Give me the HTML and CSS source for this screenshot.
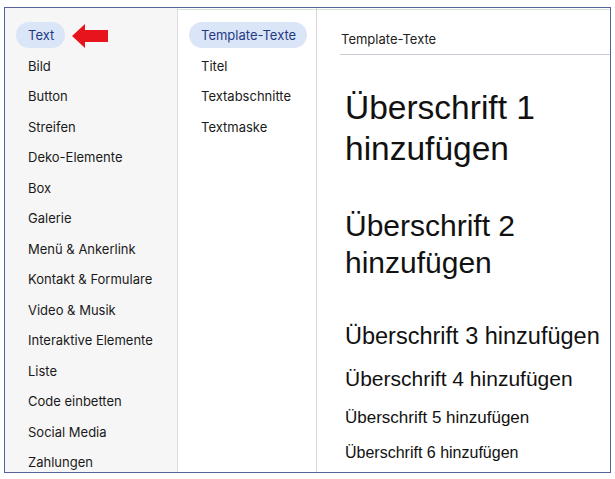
FILE: index.html
```html
<!DOCTYPE html>
<html lang="de">
<head>
<meta charset="utf-8">
<link rel="stylesheet" href="styles.css">
</head>
<body>
<div class="frame">
  <nav class="col col-left">
    <ul class="nav">
      <li class="item"><span class="label active">Text</span></li>
      <li class="item"><span class="label">Bild</span></li>
      <li class="item"><span class="label">Button</span></li>
      <li class="item"><span class="label">Streifen</span></li>
      <li class="item"><span class="label">Deko-Elemente</span></li>
      <li class="item"><span class="label">Box</span></li>
      <li class="item"><span class="label">Galerie</span></li>
      <li class="item"><span class="label">Menü &amp; Ankerlink</span></li>
      <li class="item"><span class="label">Kontakt &amp; Formulare</span></li>
      <li class="item"><span class="label">Video &amp; Musik</span></li>
      <li class="item"><span class="label">Interaktive Elemente</span></li>
      <li class="item"><span class="label">Liste</span></li>
      <li class="item"><span class="label">Code einbetten</span></li>
      <li class="item"><span class="label">Social Media</span></li>
      <li class="item"><span class="label">Zahlungen</span></li>
    </ul>
    <svg class="arrow" width="38" height="26" viewBox="0 0 38 26">
      <polygon points="0,12 13,0 13,6 36,6 36,18 13,18 13,24" fill="#e8141b"/>
    </svg>
  </nav>
  <nav class="col col-mid">
    <ul class="nav">
      <li class="item"><span class="label active">Template-Texte</span></li>
      <li class="item"><span class="label">Titel</span></li>
      <li class="item"><span class="label">Textabschnitte</span></li>
      <li class="item"><span class="label">Textmaske</span></li>
    </ul>
  </nav>
  <main class="col col-right">
    <div class="section-title">Template-Texte</div>
    <div class="h h1">Überschrift 1<br>hinzufügen</div>
    <div class="h h2">Überschrift 2<br>hinzufügen</div>
    <div class="h h3">Überschrift 3 hinzufügen</div>
    <div class="h h4">Überschrift 4 hinzufügen</div>
    <div class="h h5">Überschrift 5 hinzufügen</div>
    <div class="h h6">Überschrift 6 hinzufügen</div>
  </main>
</div>
</body>
</html>
```
FILE: styles.css
```css
* { box-sizing: border-box; }
html, body { margin: 0; padding: 0; background: #ffffff; }
body { font-family: "Inter", "Noto Sans", sans-serif; color: #1a1a1a; }

.frame {
  margin: 7px 0 0 4px;
  width: 607px;
  height: 466px;
  border: 1px solid #56639c;
  display: flex;
  overflow: hidden;
  position: relative;
}
.frame::before {
  content: "";
  position: absolute;
  left: 0; right: 0; top: 1px;
  height: 1px;
  background: #d6e4d6;
}

.col { height: 100%; }
.col-left {
  width: 173px;
  flex: none;
  background: #f6f6f6;
  border-right: 1px solid #dddddd;
  padding: 12px 0 0 11px;
  position: relative;
}
.col-mid {
  width: 139px;
  flex: none;
  background: #ffffff;
  border-right: 1px solid #d6d6d6;
  padding: 12px 0 0 11px;
}
.col-right {
  flex: 1;
  padding: 0 0 0 23px;
  background: #ffffff;
}

.nav { list-style: none; margin: 0; padding: 0; }
.item {
  height: 30.5px;
  display: flex;
  align-items: center;
}
.label {
  font-size: 13px;
  line-height: 26px;
  height: 26px;
  padding: 0 11px 0 12px;
  border-radius: 13px;
  white-space: nowrap;
}
.label.active {
  background: #dbe5f8;
  color: #1f3a85;
}

.arrow {
  position: absolute;
  left: 67px;
  top: 16px;
}

.section-title {
  font-size: 13px;
  line-height: 18px;
  padding: 22px 0 6px 1px;
  border-bottom: 1px solid #c9cdd6;
  color: #222;
}

.h {
  font-family: "Liberation Sans", Arial, sans-serif;
  color: #111;
  white-space: nowrap;
  padding-left: 5px;
}
.h1 { font-size: 33.5px; line-height: 41px; margin-top: 32px; }
.h2 { font-size: 30px; line-height: 37px; margin-top: 38px; }
.h3 { font-size: 23.5px; line-height: 30px; margin-top: 39.5px; }
.h4 { font-size: 21px; line-height: 26px; margin-top: 15px; }
.h5 { font-size: 17px; line-height: 22px; margin-top: 15px; }
.h6 { font-size: 16px; line-height: 20px; margin-top: 14px; }
```
